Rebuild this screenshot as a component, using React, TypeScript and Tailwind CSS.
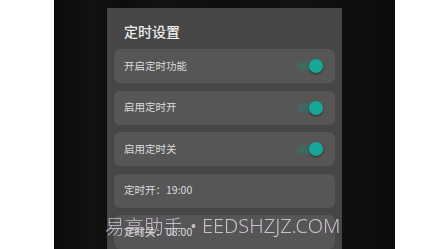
import React from "react";

function Toggle() {
  return (
    <div className="relative w-[26px] h-[16px] flex items-center">
      <div className="absolute left-[0px] w-[22px] h-[9px] rounded-full bg-[#3d6d64] opacity-75 blur-[1px]" />
      <div className="absolute right-[0px] w-[14px] h-[14px] rounded-full bg-[#15a898] shadow-[0_1px_2px_rgba(0,0,0,0.5)]" />
    </div>
  );
}

function Row({ label, toggle }: { label: string; toggle?: boolean }) {
  return (
    <div className="h-[34px] rounded-[6px] bg-[#565656] flex items-center justify-between pl-[10px] pr-[12px] shrink-0">
      <span className="text-[10.5px] text-[#dcdcdc] leading-none">{label}</span>
      {toggle && <Toggle />}
    </div>
  );
}

export default function App() {
  return (
    <div
      className="w-[448px] h-[249px] bg-white flex overflow-hidden relative"
      style={{ fontFamily: '"Noto Sans CJK SC", "Noto Sans", sans-serif' }}
    >
      <div className="w-[54px] shrink-0 bg-white" />
      <div className="w-[341px] shrink-0 h-full bg-[linear-gradient(to_right,#0a0b0a_0%,#111311_12%,#0c0c0b_20%,#121210_30%,#0e0e0e_50%,#121210_72%,#0f100e_82%,#0b0c0b_100%)] flex pl-[53px]">
        <div className="w-[235px] mt-[8px] bg-[#464646] flex flex-col px-[7px]">
          <div className="pt-[16px] pl-[10px] h-[42px] text-[14px] leading-none font-medium text-[#ececec]">
            定时设置
          </div>
          <div className="flex flex-col gap-[7.5px]">
            <Row label="开启定时功能" toggle />
            <Row label="启用定时开" toggle />
            <Row label="启用定时关" toggle />
            <Row label="定时开：19:00" />
            <Row label="定时关：08:00" />
          </div>
        </div>
      </div>
      <div className="flex-1 bg-white" />
      <div className="absolute left-[105px] top-[214px] flex items-center leading-[24px] text-[#d6c8da] opacity-90 whitespace-nowrap font-light">
        <span className="text-[19.5px]">易高助手</span>
        <span className="text-[14px] ml-[8px] mr-[6px]" style={{ fontFamily: '"Liberation Sans", sans-serif' }}>•</span>
        <span className="text-[20px]" style={{ fontFamily: '"Noto Sans", sans-serif' }}>EEDSHZJZ.COM</span>
      </div>
    </div>
  );
}
